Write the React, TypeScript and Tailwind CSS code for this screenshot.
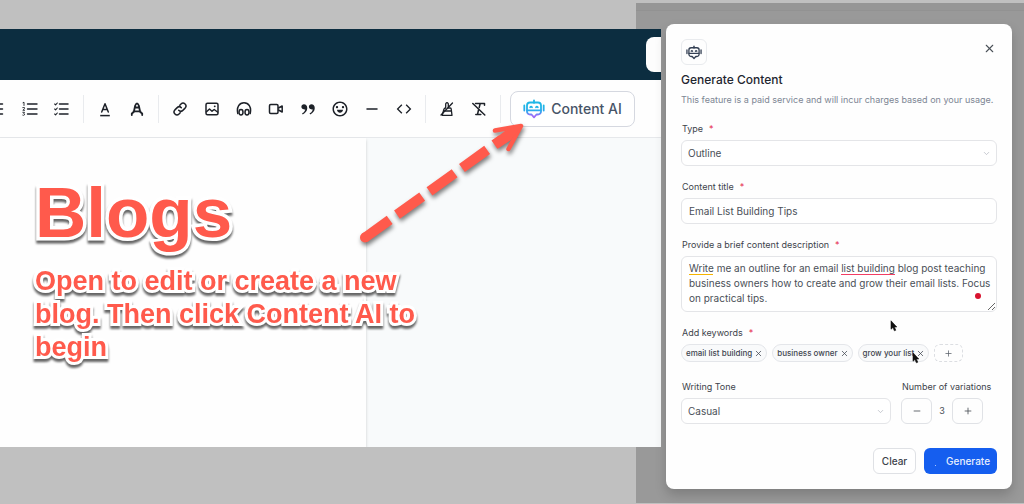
import { useState } from "react";
import type { ReactNode } from "react";
import { RiCodeLine, RiDoubleQuotesR, RiEmotionLine } from "react-icons/ri";
import { ChevronDown, Minus, Plus, X } from "lucide-react";

const Glyph = ({ children }: { children: ReactNode }) => (
  <svg
    width="16"
    height="16"
    viewBox="0 0 16 16"
    fill="none"
    stroke="currentColor"
    strokeWidth="1.5"
    strokeLinecap="round"
    strokeLinejoin="round"
  >
    {children}
  </svg>
);

const RobotIcon = ({
  className,
  gradient = false,
}: {
  className?: string;
  gradient?: boolean;
}) => (
  <svg
    className={className}
    viewBox="0 0 22 20"
    fill="none"
    stroke={gradient ? "url(#robot-gradient)" : "currentColor"}
    strokeWidth="1.8"
    strokeLinecap="round"
    strokeLinejoin="round"
  >
    <defs>
      <linearGradient
        id="robot-gradient"
        gradientUnits="userSpaceOnUse"
        x1="11"
        y1="2"
        x2="11"
        y2="19"
      >
        <stop offset="0.3" stopColor="#1fb6e6" />
        <stop offset="0.65" stopColor="#33a5ee" />
        <stop offset="0.85" stopColor="#9b6cf8" />
      </linearGradient>
    </defs>
    <path d="M11 1.3V3.8" />
    <path d="M7 3.500h8a3 3 0 0 1 3 3v6a3 3 0 0 1-3 3h-1.500L11 18.300l-2.500-2.800H7a3 3 0 0 1-3-3v-6a3 3 0 0 1 3-3Z" />
    <path d="M4.200 11.300h13.600" />
    <path d="M1.300 6.500v5h.01M20.700 6.500v5h.01" />
    <path d="M7.200 8.200q.9-1.200 1.800 0M13 8.200q.9-1.200 1.800 0" />
  </svg>
);

const toolGroups: { label: string; icon: ReactNode }[][] = [
  [
    {
      label: "Bullet list",
      icon: (
        <Glyph>
          <path d="M5 3h7.500M5 8h7.500M5 13h7.500M1.500 3h.1M1.500 8h.1M1.500 13h.1" />
        </Glyph>
      ),
    },
    {
      label: "Ordered list",
      icon: (
        <Glyph>
          <path d="M5.500 3H15M5.500 8H15M5.500 13H15" strokeWidth="1.400" />
          <path
            d="M1 1.700l1-.5V4.500M.8 6.600h1.700v1L.9 9.300h1.700M.8 11.300h1.700l-.8 1.200q1.200.2.8 1.300-.6.900-1.700.4"
            strokeWidth="0.900"
          />
        </Glyph>
      ),
    },
    {
      label: "Check list",
      icon: (
        <Glyph>
          <path d="M5.500 3H14M5.500 8H14M5.500 13H14" />
          <path
            d="M.7 3l.9.9L3.300 2M.7 8l.9.9L3.300 7M.7 13l.9.9L3.300 12"
            strokeWidth="1.100"
          />
        </Glyph>
      ),
    },
  ],
  [
    {
      label: "Text color",
      icon: (
        <Glyph>
          <path d="M4.700 11L8 2.800 11.300 11M5.800 8.500h4.400" />
          <path d="M3.200 14.600h9.600" strokeLinecap="butt" />
        </Glyph>
      ),
    },
    {
      label: "Highlight",
      icon: (
        <Glyph>
          <path
            d="M2.800 14v-1.500l2-1.500 1.400-6.500Q8 .5 9.800 4.500L11.200 11l2 1.500V14M4.500 10.300h7M6.300 6.500h3.400"
            strokeWidth="1.800"
          />
        </Glyph>
      ),
    },
  ],
  [
    {
      label: "Link",
      icon: (
        <Glyph>
          <path d="M6.700 9.300a2.900 2.900 0 0 0 4.100.1l2.300-2.300a2.900 2.900 0 0 0-4.100-4.100l-1.200 1.200" />
          <path d="M9.300 6.700a2.900 2.900 0 0 0-4.100-.1L2.900 8.900a2.900 2.900 0 0 0 4.100 4.100l1.200-1.200" />
        </Glyph>
      ),
    },
    {
      label: "Image",
      icon: (
        <Glyph>
          <rect x="2" y="2.200" width="12" height="11.600" rx="1.500" />
          <path d="M2.500 10.800l3-2.800 2.500 2.200 2.200-1.700 3.300 2.500" />
          <path d="M10.700 5.300h.1" strokeWidth="1.800" />
        </Glyph>
      ),
    },
    {
      label: "Audio",
      icon: (
        <Glyph>
          <path d="M1.800 12.500C.3 6 3.500 1.800 8 1.800s7.700 4.200 6.200 10.700" />
          <ellipse cx="5" cy="11.200" rx="2" ry="2.700" />
          <ellipse cx="11" cy="11.200" rx="2" ry="2.700" />
        </Glyph>
      ),
    },
    {
      label: "Video",
      icon: (
        <Glyph>
          <rect x="1.500" y="3.500" width="8.500" height="9" rx="1.200" />
          <path d="M10.500 7l3.700-2v6l-3.700-2" />
        </Glyph>
      ),
    },
    { label: "Quote", icon: <RiDoubleQuotesR size={18} /> },
    { label: "Emoji", icon: <RiEmotionLine size={18} /> },
    {
      label: "Divider",
      icon: (
        <Glyph>
          <path d="M3 8h10" />
        </Glyph>
      ),
    },
    { label: "Code", icon: <RiCodeLine size={16} /> },
  ],
  [
    {
      label: "Clear styles",
      icon: (
        <Glyph>
          <path
            d="M6.700 7V2.800q1.300-2.200 2.600 0V7h1.900q1 0 1 1l.8 6.300H3.200L5 8q.2-1 1.700-1M5 10h7.200"
            strokeWidth="1.300"
          />
          <path d="M13.500 2L2 14" strokeWidth="1.300" />
        </Glyph>
      ),
    },
    {
      label: "Clear formatting",
      icon: (
        <Glyph>
          <path d="M4.500 2.500h9v1.800M9.200 2.500L8.200 6.500M7.500 9l-1 4.500M4.800 13.500h5" />
          <path d="M1.800 2.500L13.800 14" />
        </Glyph>
      ),
    },
  ],
];

const Toolbar = () => (
  <div className="flex h-[58px] items-center border-b border-[#e6e8eb] bg-[#fefefe] text-[#1d2128]">
    <div className="-ml-[18px] flex items-center">
      {toolGroups.map((group, i) => (
        <div key={i} className="flex items-center">
          {group.map((tool) => (
            <button
              key={tool.label}
              aria-label={tool.label}
              className="flex h-8 w-8 items-center justify-center"
            >
              {tool.icon}
            </button>
          ))}
          <span className="mx-[5px] h-7 w-px bg-[#e9ebee]" />
        </div>
      ))}
    </div>
    <button className="ml-1 flex h-9 w-[125px] shrink-0 items-center justify-center gap-1.5 rounded-lg border border-[#d5d8e0] bg-white text-[14px] font-medium text-[#475467]">
      <RobotIcon gradient className="h-5 w-[22px]" />
      Content AI
    </button>
  </div>
);

const Arrow = () => (
  <svg
    className="absolute left-[350px] top-[80px] drop-shadow-[1px_3px_2px_rgba(0,0,0,0.5)]"
    width="190"
    height="150"
    viewBox="350 109 190 150"
    fill="none"
    aria-hidden="true"
  >
    <circle cx="365" cy="237.500" r="5" fill="#ff5a4c" />
    <path
      d="M364.500 238L502 139.200"
      stroke="#ff5a4c"
      strokeWidth="10"
      strokeDasharray="31 9"
    />
    <path
      d="M521 126L495 130.500M521 126L508.500 149"
      stroke="#ff5a4c"
      strokeWidth="4.500"
      strokeLinecap="round"
    />
    <path
      d="M521.500 125.500L505 131L492.500 140.500L498 148.500L511 140Z"
      fill="#ff5a4c"
    />
  </svg>
);

const Editor = () => (
  <main className="relative z-10 -mr-[25px] mt-[29px] mb-[57px] flex min-w-0 flex-1 flex-col overflow-hidden bg-[#f8fafb]">
    <header className="flex h-[51px] justify-end bg-[#0c2d40]">
      <button
        aria-label="Account"
        className="mt-2 h-[35px] w-[15px] rounded-l-lg bg-[#fdfdfd]"
      />
    </header>
    <Toolbar />
    <div className="w-[366px] flex-1 bg-[#fefefe] shadow-[0_2px_3px_rgba(0,0,0,0.18)]" />

    {/* callout on top of the editor */}
    <div className="absolute left-[35px] top-[142px] w-[392px] font-['Liberation_Sans',Arial,sans-serif] font-bold text-[#ff5a4c] drop-shadow-[0_3px_1px_rgba(0,0,0,0.6)] [paint-order:stroke_fill]">
      <h1 className="text-[71px] leading-[84px] [-webkit-text-stroke:7px_#fff]">
        Blogs
      </h1>
      <p className="mt-2.5 text-[27px] leading-[33px] [-webkit-text-stroke:6px_#fff]">
        Open to edit or create a new blog. Then click Content AI to begin
      </p>
    </div>
    <Arrow />
  </main>
);

const Label = ({
  htmlFor,
  required = false,
  children,
}: {
  htmlFor: string;
  required?: boolean;
  children: ReactNode;
}) => (
  <label
    htmlFor={htmlFor}
    className="mb-1 flex gap-1.5 pl-px text-[9px] leading-[14px] text-[#3d434b]"
  >
    {children}
    {required && <span className="text-[#e5284d]">*</span>}
  </label>
);

const Select = ({ id, options }: { id: string; options: string[] }) => (
  <div className="relative">
    <select
      id={id}
      className="block h-[26px] w-full appearance-none rounded-md border border-[#e4e5e8] bg-white pl-1.5 text-[10px] text-[#4a4f57]"
    >
      {options.map((option) => (
        <option key={option}>{option}</option>
      ))}
    </select>
    <ChevronDown
      size={9}
      className="pointer-events-none absolute right-[6px] top-[9px] text-[#b6bac1]"
    />
  </div>
);

const Cursor = ({ className }: { className: string }) => (
  <svg
    className={`pointer-events-none absolute ${className}`}
    width="8"
    height="12"
    viewBox="0 0 8 12"
    aria-hidden="true"
  >
    <path
      d="M1 .8v8.400l1.900-1.700 1.500 3.300 1.400-.6-1.400-3.200h2.400Z"
      fill="#111"
      stroke="#111"
      strokeWidth="0.600"
    />
  </svg>
);

const GenerateDialog = () => {
  const [keywords, setKeywords] = useState([
    "email list building",
    "business owner",
    "grow your list",
  ]);
  const [variations, setVariations] = useState(3);

  return (
    <div
      role="dialog"
      aria-labelledby="dialog-title"
      className="relative rounded-[8px] bg-[#fefefe] px-[15px] py-[15px] shadow-[0_6px_12px_rgba(0,0,0,0.18)]"
    >
      <div className="flex items-start justify-between">
        <div className="flex h-[26px] w-[26px] items-center justify-center rounded-md border border-[#e9ebee] text-[#344054]">
          <RobotIcon className="h-[15px] w-4" />
        </div>
        <button aria-label="Close" className="mt-[3px] mr-px text-[#4b5158]">
          <X size={13} strokeWidth={2} />
        </button>
      </div>
      <h2
        id="dialog-title"
        className="mt-1.5 text-[12px] leading-[18px] font-medium text-[#1f2630]"
      >
        Generate Content
      </h2>
      <p className="mt-1 text-[9px] leading-[14px] text-[#7d8694]">
        This feature is a paid service and will incur charges based on your usage.
      </p>

      <form
        className="mt-[15px] flex flex-col gap-[14px]"
        onSubmit={(e) => e.preventDefault()}
      >
        <div>
          <Label htmlFor="type" required>
            Type
          </Label>
          <Select id="type" options={["Outline", "Blog post"]} />
        </div>
        <div>
          <Label htmlFor="title" required>
            Content title
          </Label>
          <input
            id="title"
            defaultValue="Email List Building Tips"
            className="block h-[26px] w-full rounded-md border border-[#e4e5e8] bg-white px-[7px] text-[10px] text-[#4a4f57]"
          />
        </div>
        <div>
          <Label htmlFor="description" required>
            Provide a brief content description
          </Label>
          <div className="relative">
            <textarea
              id="description"
              defaultValue="Write me an outline for an email list building blog post teaching business owners how to create and grow their email lists. Focus on practical tips."
              spellCheck={false}
              className="block h-14 w-full resize-y overflow-hidden rounded-md border border-[#e4e5e8] bg-white pt-1 pr-0.5 pl-[7px] text-[10px] leading-[15px] text-[#4a4f57]"
            />
            <span className="absolute left-2 top-[18px] h-px w-6 bg-[#f5b400]" />
            <span className="absolute left-[160px] top-[18px] h-px w-[54px] bg-[#f23d63]" />
            <span className="absolute right-4 top-[37px] h-[6px] w-[6px] rounded-full bg-[#d8132f]" />
          </div>
        </div>
        <div>
          <Label htmlFor="add-keyword" required>
            Add keywords
          </Label>
          <div className="flex gap-[5px]">
            {keywords.map((keyword) => (
              <span
                key={keyword}
                className="flex h-[18px] items-center gap-0.5 rounded-full border border-[#e4e6ea] bg-[#f9fafb] pr-[3px] pl-1 text-[8px] font-medium whitespace-nowrap text-[#3f4650]"
              >
                {keyword}
                <button
                  type="button"
                  aria-label={`Remove ${keyword}`}
                  onClick={() =>
                    setKeywords(keywords.filter((k) => k !== keyword))
                  }
                >
                  <X size={9} />
                </button>
              </span>
            ))}
            <button
              id="add-keyword"
              type="button"
              aria-label="Add keyword"
              className="flex h-[18px] w-[29px] items-center justify-center rounded-md border border-dashed border-[#dcdee2] text-[#5a6069]"
            >
              <Plus size={9} />
            </button>
          </div>
        </div>
        <div className="mt-1 flex gap-2.5">
          <div className="flex-1">
            <Label htmlFor="tone">Writing Tone</Label>
            <Select id="tone" options={["Casual", "Formal"]} />
          </div>
          <div className="w-24">
            <Label htmlFor="variations">Number of variations</Label>
            <div className="flex items-center">
              <button
                type="button"
                aria-label="Fewer"
                onClick={() => setVariations(Math.max(1, variations - 1))}
                className="flex h-[26px] w-[31px] items-center justify-center rounded-md border border-[#e0e2e6] text-[#4a4f57]"
              >
                <Minus size={10} />
              </button>
              <output
                id="variations"
                className="w-[20px] text-center text-[9px] text-[#4a4f57]"
              >
                {variations}
              </output>
              <button
                type="button"
                aria-label="More"
                onClick={() => setVariations(variations + 1)}
                className="flex h-[26px] w-[31px] items-center justify-center rounded-md border border-[#e0e2e6] text-[#4a4f57]"
              >
                <Plus size={10} />
              </button>
            </div>
          </div>
        </div>
        <div className="mt-2.5 flex justify-end gap-2 text-[10px] font-medium">
          <button
            type="reset"
            className="h-[26px] w-[43px] rounded-md border border-[#dfe1e5] bg-white text-[#3c424b]"
          >
            Clear
          </button>
          <button
            type="submit"
            className="flex h-[26px] w-[73px] items-center justify-end rounded-md bg-[#155eef] pr-[7px] text-[#e8effe]"
          >
            <span className="mt-2 mr-2.5 h-px w-px bg-[#a9c4fb]" />
            Generate
          </button>
        </div>
      </form>

      <Cursor className="left-[224px] top-[296px]" />
      <Cursor className="left-[246px] top-[328px]" />
    </div>
  );
};

const App = () => {
  return (
    <div className="flex min-h-screen overflow-hidden bg-[#c0c0c0] font-[Inter,sans-serif]">
      <Editor />
      <aside className="mt-[3px] mb-px w-[388px] shrink-0 bg-[#999999]">
        <div className="h-2 border-b border-[#929292] bg-[#969696]" />
        <div className="relative z-20 mt-[13px] mr-3 ml-[30px]">
          <GenerateDialog />
        </div>
      </aside>
    </div>
  );
};

export default App;
